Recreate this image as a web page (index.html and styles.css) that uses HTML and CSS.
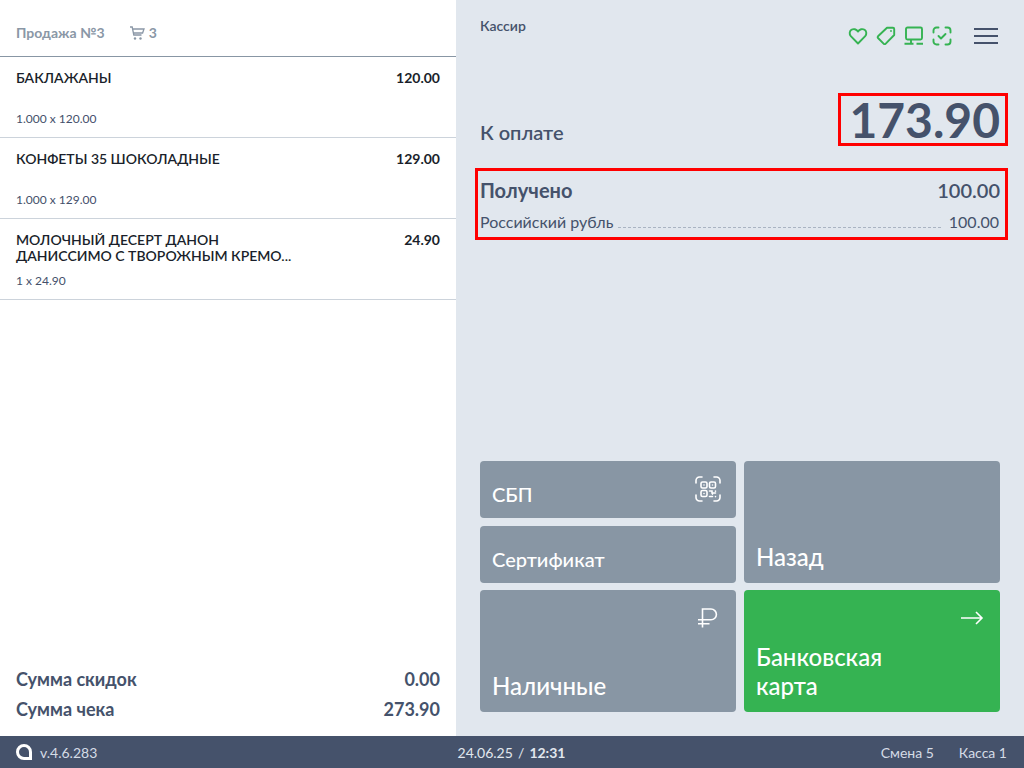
FILE: index.html
```html
<!DOCTYPE html>
<html lang="ru">
<head>
<meta charset="utf-8">
<title>Касса</title>
<link rel="stylesheet" href="styles.css">
</head>
<body>
<div class="app">
  <div class="main">
    <section class="left">
      <header class="sale-head">
        <span class="sale-title">Продажа №3</span>
        <span class="sale-count">
          <svg class="cart" viewBox="0 0 16 16" width="16" height="16" fill="none" stroke="#8a97a6" stroke-width="1.3"><path d="M1 2h2.200l1.600 8h7.700M3.800 4H15l-1.400 4H4.800"/><circle cx="6" cy="13.500" r="1.200" fill="#8a97a6" stroke="none"/><circle cx="11.500" cy="13.500" r="1.200" fill="#8a97a6" stroke="none"/></svg>
          3
        </span>
      </header>
      <div class="items">
        <article class="item">
          <div class="item-top"><div class="item-name">БАКЛАЖАНЫ</div><div class="item-price">120.00</div></div>
          <div class="item-qty">1.000 x 120.00</div>
        </article>
        <article class="item">
          <div class="item-top"><div class="item-name">КОНФЕТЫ 35 ШОКОЛАДНЫЕ</div><div class="item-price">129.00</div></div>
          <div class="item-qty">1.000 x 129.00</div>
        </article>
        <article class="item">
          <div class="item-top"><div class="item-name">МОЛОЧНЫЙ ДЕСЕРТ ДАНОН<br>ДАНИССИМО С ТВОРОЖНЫМ КРЕМО...</div><div class="item-price">24.90</div></div>
          <div class="item-qty">1 x 24.90</div>
        </article>
      </div>
      <div class="totals">
        <div class="total-row"><span>Сумма скидок</span><span class="total-val">0.00</span></div>
        <div class="total-row"><span>Сумма чека</span><span class="total-val">273.90</span></div>
      </div>
    </section>
    <section class="right">
      <div class="top">
        <div class="cashier">Кассир</div>
        <div class="icons">
          <svg viewBox="0 0 20 20" width="20" height="20" fill="none" stroke="#35b352" stroke-width="1.9" stroke-linejoin="round"><path d="M10 17.500 2.800 10.200C1.100 8.200 1.400 5.200 3.400 3.800 5.500 2.500 8.400 3 10 5.600c1.600-2.600 4.500-3.100 6.600-1.800 2 1.400 2.300 4.400.6 6.400z"/></svg>
          <svg viewBox="0 0 20 20" width="20" height="20" fill="none" stroke="#35b352" stroke-width="1.9" stroke-linejoin="round"><path d="M11 1.800h6a1.200 1.200 0 0 1 1.200 1.200v6L9.500 17.800a1.200 1.200 0 0 1-1.700 0L2 12a1.200 1.200 0 0 1 0-1.700z"/><circle cx="15" cy="5" r=".9" fill="#35b352" stroke="none"/></svg>
          <svg viewBox="0 0 20 20" width="20" height="20" fill="none" stroke="#35b352" stroke-width="1.9"><rect x="2" y="1.500" width="16" height="12" rx="1.500"/><path d="M7 13.500v4M.5 17.800h9M12.500 17.800h6.500"/></svg>
          <svg viewBox="0 0 20 20" width="20" height="20" fill="none" stroke="#35b352" stroke-width="1.900" stroke-linecap="round" stroke-linejoin="round"><path d="M1.500 6.500V4.500a3 3 0 0 1 3-3h2M13.500 1.500h2a3 3 0 0 1 3 3v2M18.500 13.500v2a3 3 0 0 1-3 3h-2M6.500 18.500h-2a3 3 0 0 1-3-3v-2M6.500 10l2.500 2.500 4.500-4.500"/></svg>
          <div class="burger"><i></i><i></i><i></i></div>
        </div>
      </div>
      <div class="due">
        <div class="due-label">К оплате</div>
        <div class="due-value framed">173.90</div>
      </div>
      <div class="received framed">
        <div class="received-row"><span class="rec-title">Получено</span><span class="rec-val">100.00</span></div>
        <div class="currency-row"><span>Российский рубль</span><span class="dots"></span><span>100.00</span></div>
      </div>
      <div class="pay">
        <button class="btn btn-sbp">СБП
          <svg class="btn-icon icon-qr" viewBox="0 0 26 26" width="26" height="26" fill="none" stroke="#fff" stroke-width="1.600" stroke-linecap="round"><path d="M1 7V4.500A3.500 3.500 0 0 1 4.500 1H7M19 1h2.500A3.500 3.500 0 0 1 25 4.500V7M25 19v2.500a3.500 3.500 0 0 1-3.500 3.500H19M7 25H4.500A3.500 3.500 0 0 1 1 21.500V19"/><rect x="6" y="6" width="6" height="6" rx="1.500"/><rect x="14.500" y="6" width="6" height="6" rx="1.500"/><rect x="6" y="14.500" width="6" height="6" rx="1.500"/><circle cx="9" cy="9" r=".8" fill="#fff" stroke="none"/><circle cx="17.500" cy="9" r=".8" fill="#fff" stroke="none"/><circle cx="9" cy="17.500" r=".8" fill="#fff" stroke="none"/><path d="M14.500 15h2.500v2h3.500M14.500 20.500h3M20.500 15v.2M20.500 20.500v.1M17.500 18v.1"/></svg>
        </button>
        <button class="btn btn-back">Назад</button>
        <button class="btn btn-cert">Сертификат</button>
        <button class="btn btn-cash">Наличные
          <svg class="btn-icon icon-rub" viewBox="0 0 22 22" width="22" height="22" fill="none" stroke="#fff" stroke-width="1.600"><path d="M5.500 20.500V2h8.500a5.400 5.400 0 0 1 0 10.800H1M1 16.800h11.500"/></svg>
        </button>
        <button class="btn btn-card">Банковская<br>карта
          <svg class="btn-icon icon-arrow" viewBox="0 0 24 16" width="24" height="16" fill="none" stroke="#fff" stroke-width="1.600"><path d="M1 8h21M16 2l6 6-6 6"/></svg>
        </button>
      </div>
    </section>
  </div>
  <footer class="status">
    <div class="status-left">
      <svg viewBox="0 0 16 16" width="16" height="16" fill="none" stroke="#fff" stroke-width="3"><path d="M8 1.500a6.500 6.500 0 1 0 0 13h6.500V8A6.500 6.500 0 0 0 8 1.500z"/></svg>
      <span>v.4.6.283</span>
    </div>
    <div class="status-mid">24.06.25 <span class="slash">/</span> <b>12:31</b></div>
    <div class="status-right"><span>Смена 5</span><span>Касса 1</span></div>
  </footer>
</div>
</body>
</html>
```
FILE: styles.css
```css
* { box-sizing: border-box; }
html, body { margin: 0; height: 100%; }
body { font-family: Lato, "Noto Sans", sans-serif; color: #222; background: #fff; }
.app { width: 1024px; height: 768px; display: flex; flex-direction: column; overflow: hidden; }
.main { flex: 1; display: flex; min-height: 0; }

.left { width: 456px; background: #fff; display: flex; flex-direction: column; }
.sale-head { height: 57px; border-bottom: 1px solid #8896a4; padding: 9px 16px 0; display: flex; align-items: center; gap: 24px; font-size: 14px; font-weight: 700; color: #8a97a6; }
.sale-count { display: flex; align-items: center; gap: 4px; }
.items { flex: 1; }
.item { height: 81px; border-bottom: 1px solid #ccd3db; padding: 13px 16px 0; display: flex; flex-direction: column; }
.item-top { display: flex; justify-content: space-between; font-size: 14px; line-height: 16px; font-weight: 600; color: #1a1f2b; height: 41px; }
.item-price { font-weight: 700; }
.item-qty { font-size: 12px; line-height: 16px; color: #44506b; }
.totals { padding: 0 16px 12px; }
.total-row { display: flex; justify-content: space-between; font-size: 18px; line-height: 30px; font-weight: 700; color: #45526b; }

.right { width: 568px; background: #e1e7ee; display: flex; flex-direction: column; padding: 0 24px; }
.top { height: 93px; display: flex; justify-content: space-between; align-items: flex-start; }
.cashier { font-size: 14px; font-weight: 600; color: #45526b; margin-top: 17px; }
.icons { display: flex; align-items: center; gap: 8px; margin-top: 26px; margin-right: 2px; }
.burger { width: 24px; margin-left: 14px; display: flex; flex-direction: column; gap: 5px; }
.burger i { display: block; height: 2px; background: #45526b; }
.framed { outline: 3px solid #ff0000; outline-offset: -3px; }
.due { display: flex; justify-content: space-between; align-items: flex-end; height: 53px; margin-right: -8px; }
.due-label { font-size: 20px; font-weight: 600; color: #45526b; padding-bottom: 2px; }
.due-value { font-size: 48px; font-weight: 700; color: #45526b; line-height: 53px; padding: 0 8px 0 11px; }
.received { margin: 22px -8px 0 -5px; height: 72px; padding: 9px 9px 0 5px; color: #45526b; }
.received-row { display: flex; justify-content: space-between; font-size: 20px; line-height: 26px; }
.rec-title { font-weight: 700; }
.rec-val { font-weight: 600; margin-right: -1px; }
.currency-row { display: flex; align-items: baseline; font-size: 16px; line-height: 20px; margin-top: 9px; gap: 5px; }
.dots { flex: 1; border-bottom: 1px dashed #aab4c2; margin-right: 3px; }

.pay { margin-top: auto; margin-bottom: 24px; display: grid; grid-template-columns: 256px 256px; grid-template-rows: 57px 57px 122px; column-gap: 8px; row-gap: 7.5px; grid-template-areas: "sbp back" "cert back" "cash card"; }
.btn { position: relative; border: 0; border-radius: 4px; background: #8896a4; color: #fff; font-family: inherit; font-size: 24px; font-weight: 500; text-align: left; padding: 0 12px 12px; display: flex; align-items: flex-end; line-height: 28px; margin: 0; }
.btn-sbp { grid-area: sbp; font-size: 20px; padding-bottom: 10px; }
.btn-cert { grid-area: cert; font-size: 20px; padding-bottom: 10px; }
.btn-back { grid-area: back; }
.btn-cash { grid-area: cash; }
.btn-card { grid-area: card; background: #35b352; display: block; padding-top: 51px; line-height: 29px; }
.btn-icon { position: absolute; }
.icon-qr { right: 15px; top: 15px; }
.icon-rub { right: 17px; top: 17px; }
.icon-arrow { right: 16px; top: 20px; }

.status { height: 32px; background: #45526b; color: #d5dce6; font-size: 14px; display: grid; grid-template-columns: 1fr auto 1fr; align-items: center; padding: 0 17px 0 16px; }
.status-left { display: flex; align-items: center; gap: 8px; }
.status-mid { color: #e1e7ee; }
.slash { margin: 0 1.5px; }
.status-right { display: flex; justify-content: flex-end; gap: 25px; }
```
